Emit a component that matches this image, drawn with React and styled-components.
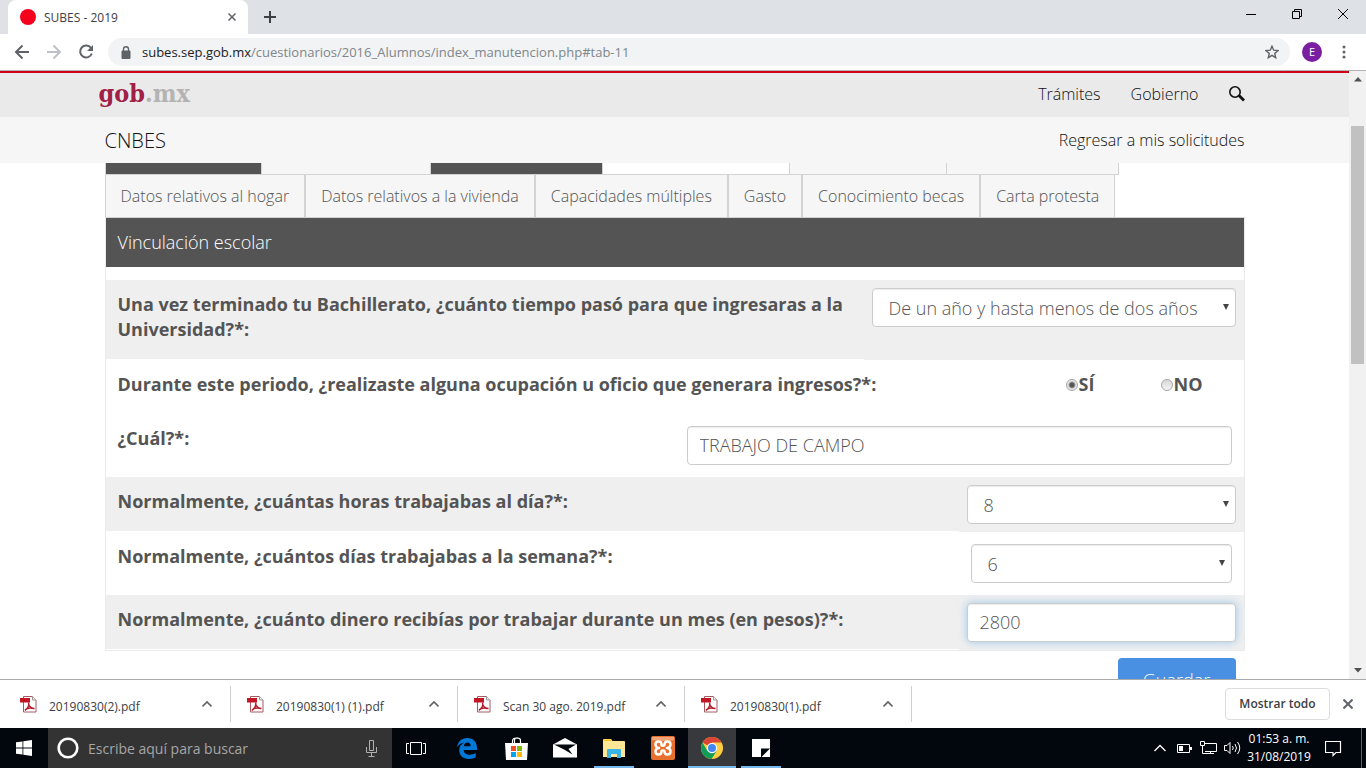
import React from "react";
import styled, { createGlobalStyle, css } from "styled-components";

const GlobalStyle = createGlobalStyle`
  *, *::before, *::after { box-sizing: border-box; }
  html, body, #root { height: 100%; margin: 0; }
  body { overflow: hidden; font-family: "Open Sans", sans-serif; color: #545454; background: #fff; }
  button, input, select { font-family: inherit; margin: 0; }
  a { color: inherit; text-decoration: none; }
  svg { display: block; flex: none; }
`;

const Screen = styled.div`
  display: flex;
  flex-direction: column;
  height: 100vh;
`;

const IconButton = styled.button`
  display: flex;
  align-items: center;
  justify-content: center;
  width: ${(p) => p.$width || 32}px;
  height: ${(p) => p.$height || 32}px;
  padding: 0;
  border: 0;
  background: none;
  color: ${(p) => p.$color || "#5f6368"};
`;

/* Browser chrome */
const TabStrip = styled.header`
  display: flex;
  height: 34px;
  flex: none;
  padding-left: 8px;
  background: #dee1e6;
`;

const BrowserTab = styled.div`
  display: flex;
  align-items: center;
  width: 240px;
  padding: 0 8px 0 12px;
  border-radius: 8px 8px 0 0;
  background: #fff;
  color: #3c4043;
  font-size: 12px;
`;

const Favicon = styled.span`
  width: 16px;
  height: 16px;
  margin-right: 8px;
  border-radius: 50%;
  background: #f5001d;
`;

const TabTitle = styled.span`
  flex: 1;
`;

const WindowButtons = styled.div`
  display: flex;
  margin-left: auto;
`;

const Toolbar = styled.nav`
  display: flex;
  align-items: center;
  height: 36px;
  flex: none;
  padding: 0 6px;
  background: #fff;
`;

const AddressBar = styled.div`
  display: flex;
  flex: 1;
  align-items: center;
  height: 28px;
  margin: 0 6px;
  padding: 0 2px 0 12px;
  border-radius: 14px;
  background: #f1f3f4;
  color: #80868b;
  font-size: 13px;
  white-space: nowrap;
`;

const Url = styled.span`
  flex: 1;
  margin-left: 10px;
`;

const Host = styled.span`
  color: #202124;
`;

const Avatar = styled.button`
  width: 20px;
  height: 20px;
  margin: 0 6px;
  padding: 0;
  border: 0;
  border-radius: 50%;
  background: #7b1fa2;
  color: #fff;
  font-size: 11px;
  line-height: 20px;
`;

const Viewport = styled.div`
  display: flex;
  flex: 1;
  min-height: 0;
  border-top: 1px solid #b4b4b4;
  overflow: hidden;
`;

const Page = styled.div`
  flex: 1;
  min-width: 0;
  overflow: hidden;
  font-size: 16px;
  font-weight: 300;
`;

const Container = styled.div`
  display: flex;
  align-items: center;
  max-width: 1140px;
  height: 100%;
  margin: 0 auto;
  color: #111;
`;

const GovBar = styled.div`
  height: 46px;
  padding-bottom: 2px;
  border-top: 2px solid #d0021b;
  background: #eaeaea;
`;

const SiteBar = styled.div`
  height: 46px;
  background: #f6f6f6;
`;

const Logo = styled.a`
  margin: 0 auto 0 -6px;
  color: #a12046;
  font-family: "DejaVu Serif Condensed", "DejaVu Serif", serif;
  font-size: 25px;
  font-weight: 700;
  line-height: 40px;
`;

const LogoSuffix = styled.span`
  color: #b3b3b3;
`;

const NavLink = styled.a`
  margin-right: 30px;
`;

const SiteName = styled.a`
  margin-right: auto;
  font-size: 20px;
`;

const Main = styled.main`
  max-width: 1140px;
  margin: 0 auto;
`;

const TabRow = styled.div`
  display: flex;
  height: ${(p) => p.$height}px;
`;

const TabEdge = styled.span`
  width: ${(p) => p.$width}px;
  border: solid #d3d3d3;
  border-width: 0 1px 1px ${(p) => (p.$first ? 1 : 0)}px;
  background: ${(p) => p.$fill};
`;

const FormTab = styled.button`
  padding: 0 15px;
  border: solid #d3d3d3;
  border-width: 0 1px;
  background: #f6f6f6;
  color: #545454;
  font-size: 16px;
  font-weight: 300;
  white-space: nowrap;
`;

const Panel = styled.section`
  border: 1px solid #ebebeb;
  border-top-color: #d3d3d3;
`;

const PanelTitle = styled.h2`
  margin: 0 0 13px;
  padding: 0 12px;
  background: #545454;
  color: #fff;
  font-size: 18px;
  font-weight: 300;
  line-height: 49px;
`;

const Row = styled.div`
  display: grid;
  grid-template-columns: minmax(0, 1fr) ${(p) => p.$control}px;
  min-height: ${(p) => p.$height}px;
  background: ${(p) => (p.$shaded ? "#efefef" : "#fff")};
  font-size: 18px;
  font-weight: 700;
  line-height: 25px;
`;

const Question = styled.label`
  padding: 12px 12px 0;
  border-bottom: 1px solid #fff;
`;

const Control = styled.div`
  position: relative;
  padding: ${(p) => (p.$inset ? "12px 12px 0" : "8px 8px 0")};
`;

const fieldStyle = css`
  display: block;
  width: 100%;
  height: 39px;
  border: 1px solid #ccc;
  border-radius: 4px;
  background: #fff;
  box-shadow: inset 0 1px 1px rgba(0, 0, 0, 0.08);
  color: #545454;
  font-size: 18px;
  font-weight: 300;
  outline: 0;
`;

const TextInput = styled.input`
  ${fieldStyle}
  padding: 0 12px 2px;
  ${(p) => p.$glow && css`box-shadow: inset 0 1px 1px rgba(0, 0, 0, 0.08), 0 0 8px rgba(102, 175, 233, 0.6);`}
`;

const Select = styled.select`
  ${fieldStyle}
  appearance: none;
  padding: 1px 16px 0;
`;

const SelectBox = styled.div`
  position: relative;

  &::after {
    content: "";
    position: absolute;
    top: 16px;
    right: 7px;
    border: solid transparent;
    border-width: 6px 3px 0;
    border-top-color: #444;
  }
`;

const RadioGroup = styled.div`
  display: grid;
  grid-template-columns: 95px 1fr;
  padding-top: 12px;
`;

const RadioLabel = styled.label`
  display: flex;
  align-items: center;
  height: 25px;
`;

const Radio = styled.input`
  appearance: none;
  width: 12px;
  height: 12px;
  margin-right: 1px;
  border: 1px solid #a5a5a5;
  border-radius: 50%;
  background: linear-gradient(#d8d8d8, #f4f4f4);

  &:checked {
    background: radial-gradient(circle, #555 0 2px, #e8e8e8 4px);
  }
`;

const Actions = styled.div`
  display: flex;
  justify-content: flex-end;
  padding: 7px 9px 0;
`;

const SaveButton = styled.button`
  width: 118px;
  height: 44px;
  border: 0;
  border-radius: 4px;
  background: #4a90e2;
  color: #fff;
  font-size: 18px;
  font-weight: 300;
`;

const Scrollbar = styled.div`
  display: flex;
  flex-direction: column;
  align-items: center;
  width: 17px;
  padding: 6px 0;
  background: #f1f1f1;
`;

const Thumb = styled.div`
  width: 13px;
  height: 40%;
  margin: 44px 0 auto;
  background: #c1c1c1;
`;

/* Downloads shelf */
const Shelf = styled.div`
  display: flex;
  align-items: center;
  height: 49px;
  flex: none;
  padding-right: 2px;
  border-top: 1px solid #a9a9a9;
  background: #fff;
  color: #3c4043;
`;

const Download = styled.div`
  display: flex;
  align-items: center;
  width: ${(p) => (p.$first ? 231 : 227)}px;
  height: 36px;
  padding: 0 7px 0 ${(p) => (p.$first ? 20 : 16)}px;
  border-right: 1px solid #cfcfcf;
`;

const FileLink = styled.a`
  flex: 1;
  margin-left: 12px;
  padding-top: 4px;
  font-size: 12px;
  white-space: nowrap;
`;

const ShowAll = styled.button`
  width: 105px;
  height: 32px;
  margin: 0 2px 0 auto;
  padding: 0 0 2px;
  border: 1px solid #dadce0;
  border-radius: 4px;
  background: #fff;
  color: #3c4043;
  font-size: 12px;
  font-weight: 600;
`;

/* Taskbar */
const Taskbar = styled.footer`
  display: flex;
  height: 40px;
  flex: none;
  background: #02060d;
  color: #fff;
`;

const SearchBox = styled.label`
  display: flex;
  align-items: center;
  width: 344px;
  padding: 0 14px 0 8px;
  background: #333;
`;

const SearchInput = styled.input`
  flex: 1;
  min-width: 0;
  padding: 0 0 0 9px;
  border: 0;
  background: none;
  color: #fff;
  font-size: 14px;
  outline: 0;

  &::placeholder { color: #a6a6a6; opacity: 1; }
`;

const Apps = styled.div`
  display: flex;
  gap: 1px;
  margin-left: 3px;
`;

const AppButton = styled.button`
  display: flex;
  align-items: center;
  justify-content: center;
  width: 48px;
  padding: 0;
  border: 0;
  background: ${(p) => (p.$active ? "#37393d" : "none")};
  background-image: ${(p) => (p.$open || p.$active ? "linear-gradient(#76b9ed, #76b9ed)" : "none")};
  background-repeat: no-repeat;
  background-position: 50% 100%;
  background-size: ${(p) => (p.$active ? 48 : 40)}px 2px;
`;

const Tray = styled.div`
  display: flex;
  align-items: center;
  margin-left: auto;
`;

const Clock = styled.time`
  width: 70px;
  font-size: 12px;
  line-height: 18px;
  text-align: center;
  white-space: nowrap;
`;

const ShowDesktop = styled.span`
  width: 5px;
  height: 40px;
  margin-left: 9px;
  border-left: 1px solid #5c5f64;
`;

const Stroke = ({ size = 16, d, width = 2, vb = 16, ...rest }) => (
  <svg width={size} height={size} viewBox={`0 0 ${vb} ${vb}`} fill="none" stroke="currentColor" strokeWidth={width} aria-hidden="true" {...rest}>
    <path d={d} />
  </svg>
);

const PdfIcon = () => (
  <svg width="17" height="17" viewBox="0 0 17 17" aria-hidden="true">
    <path d="M3.500.5h9l3.500 3.500v12h-12.500z" fill="#fff" stroke="#a65a5e" />
    <path d="M12.500.5v3.500H16" fill="#eee" stroke="#999" />
    <path d="M0 2h10v4.500H0z" fill="#c21625" />
    <path d="M8.500 6.500c1 2.500-1 6-3.500 8M8.500 8c1 3 3 4.500 6 4.500M5 14c2-2 5.500-2.500 9-1.500" fill="none" stroke="#b71c2b" strokeWidth="1.500" />
  </svg>
);

const Arrow = ({ down }) => (
  <svg width="8" height="5" viewBox="0 0 8 5" aria-hidden="true">
    <path d={down ? "M0 0h8L4 4.500z" : "M0 4.500h8L4 0z"} fill="#505050" />
  </svg>
);

const WindowsIcon = () => (
  <svg width="16" height="16" viewBox="0 0 16 16" fill="#fff" aria-hidden="true">
    <path d="M0 2.300l6.500-.9v6.200H0zM7.300 1.300L16 0v7.600H7.300zM0 8.400h6.500v6.200L0 13.700zM7.300 8.400H16V16l-8.700-1.300z" />
  </svg>
);

const MicIcon = () => (
  <svg width="13" height="17" viewBox="0 0 13 17" fill="none" stroke="#b0b0b0" aria-hidden="true">
    <path d="M4.500.5h4v10h-4zM1.500 7v5.500h10V7M6.500 12.500v3.500M3.500 16.500h6" />
  </svg>
);

const TaskViewIcon = () => (
  <svg width="20" height="13" viewBox="0 0 20 13" fill="none" stroke="#fff" aria-hidden="true">
    <path d="M4.500.5h11v12h-11zM3 1.500H.5v10H3M17 1.500h2.500v10H17" />
  </svg>
);

const EdgeIcon = () => (
  <svg width="20" height="21" viewBox="0 0 20 21" aria-hidden="true">
    <path d="M0 9.300C.8 3.600 4.600 0 10.200 0 16.200 0 20 4.100 20 10v2H6.600c.2 3.200 2.900 4.700 6.100 4.700 2.200 0 4.200-.6 6-1.700v4.300c-2 1.100-4.300 1.700-7 1.700-5.800 0-9.500-3.500-9.500-8.700 0-3.700 2-6.400 5.200-7.900C4 4.900 1.600 6.600 0 9.300zM6.800 8.300h6.900c0-2.300-1.200-3.700-3.300-3.700-2 0-3.300 1.400-3.600 3.700z" fill="#0078d7" />
  </svg>
);

const StoreIcon = () => (
  <svg width="23" height="23" viewBox="0 0 23 23" aria-hidden="true">
    <path d="M7.500 7V4q0-3 4-3t4 3v3M9.500 7V3q0-2 3-2t3 2" fill="none" stroke="#fff" strokeWidth="1.200" />
    <path d="M0 6h23l-1 17H1z" fill="#fff" />
    <path d="M6 9h5v5H6z" fill="#f25022" />
    <path d="M12 9h5v5h-5z" fill="#7fba00" />
    <path d="M6 15h5v5H6z" fill="#00a4ef" />
    <path d="M12 15h5v5h-5z" fill="#ffb900" />
  </svg>
);

const MailIcon = () => (
  <svg width="24" height="20" viewBox="0 0 24 20" aria-hidden="true">
    <path d="M0 6.500L12 0l12 6.500v13H0z" fill="#fff" />
    <path d="M1 6.500h22L15.500 11l4 5.500L11 11.500z" fill="#02060d" />
  </svg>
);

const FolderIcon = () => (
  <svg width="22" height="19" viewBox="0 0 22 19" aria-hidden="true">
    <path d="M0 1q0-1 1-1h7l1.500 2H21q1 0 1 1v15H0z" fill="#ffe596" />
    <path d="M1 .5h7l1 1.500H1z" fill="#f5c11f" />
    <path d="M4 19v-8q0-1 1-1h12q1 0 1 1v8h-4v-4H8v4z" fill="#39b5e8" />
  </svg>
);

const XamppIcon = () => (
  <svg width="24" height="24" viewBox="0 0 24 24" aria-hidden="true">
    <rect width="24" height="24" rx="2" fill="#e9702c" />
    <path d="M1 1h22v3q-11 2-22 0z" fill="#f3a57a" />
    <path
      d="M10.500 9.500V8.500C10.500 4.500 4.500 4.500 4.500 8.500c0 2 1.500 3.500 3.500 3.500-2 0-3.500 1.500-3.500 3.500 0 4 6 4 6 0 0-1.500 3-1.500 3 0 0 4 6 4 6 0 0-2-1.500-3.500-3.500-3.500 2 0 3.500-1.500 3.500-3.500 0-4-6-4-6 0 0 1.500-3 1.500-3 0z"
      fill="none"
      stroke="#fff"
      strokeWidth="2.500"
      strokeLinejoin="round"
    />
  </svg>
);

const ChromeIcon = () => (
  <svg width="22" height="22" viewBox="0 0 22 22" aria-hidden="true">
    <circle cx="11" cy="11" r="11" fill="#ffcd40" />
    <path d="M11 11L1.500 5.500A11 11 0 0 1 20.500 5.500H11z" fill="#db4437" />
    <path d="M1.500 5.500A11 11 0 0 0 10.500 22L15.800 13.800 6.200 13.800z" fill="#0f9d58" />
    <circle cx="11" cy="11" r="5.200" fill="#fff" />
    <circle cx="11" cy="11" r="4" fill="#4285f4" />
  </svg>
);

const NotesIcon = () => (
  <svg width="18" height="18" viewBox="0 0 18 18" aria-hidden="true">
    <path d="M0 0h18v18H0z" fill="#fff" />
    <path d="M9 9.500h9L9.500 18H9z" fill="#02060d" />
  </svg>
);

const downloads = ["20190830(2).pdf", "20190830(1) (1).pdf", "Scan 30 ago. 2019.pdf", "20190830(1).pdf"];

const formTabs = [
  "Datos relativos al hogar",
  "Datos relativos a la vivienda",
  "Capacidades múltiples",
  "Gasto",
  "Conocimiento becas",
  "Carta protesta",
];

const upperTabs = [
  { width: 157, fill: "#545454" },
  { width: 169, fill: "#f6f6f6" },
  { width: 172, fill: "#545454" },
  { width: 187, fill: "#fff" },
  { width: 157, fill: "#f6f6f6" },
  { width: 172, fill: "#f6f6f6" },
];

const SelectField = ({ id, value }) => (
  <SelectBox>
    <Select id={id} defaultValue={value}>
      <option>{value}</option>
    </Select>
  </SelectBox>
);

export default function App() {
  return (
    <Screen>
      <GlobalStyle />
      <TabStrip>
        <BrowserTab>
          <Favicon />
          <TabTitle>SUBES - 2019</TabTitle>
          <IconButton $width={16}><Stroke size={8} vb={8} width={1.5} d="M.5.5l7 7M7.500.5l-7 7" /></IconButton>
        </BrowserTab>
        <IconButton $width={44} $height={34} $color="#3c4043"><Stroke size={12} vb={12} d="M6 0v12M0 6h12" /></IconButton>
        <WindowButtons>
          <IconButton $width={46} $height={28} $color="#000"><Stroke size={10} vb={10} width={1} d="M0 5.500h10" /></IconButton>
          <IconButton $width={46} $height={28} $color="#000"><Stroke size={10} vb={10} width={1} d="M.5 2.500h7v7h-7zM2.500 2.500v-2h7v7h-2" /></IconButton>
          <IconButton $width={46} $height={28} $color="#000"><Stroke size={10} vb={10} width={1} d="M0 0l10 10M10 0L0 10" /></IconButton>
        </WindowButtons>
      </TabStrip>

      <Toolbar>
        <IconButton><Stroke d="M15 8H2M8.500 1.500L2 8l6.500 6.500" /></IconButton>
        <IconButton $color="#bdc1c6"><Stroke d="M1 8h13M7.500 1.500L14 8l-6.500 6.500" /></IconButton>
        <IconButton>
          <svg width="16" height="16" viewBox="0 0 16 16" aria-hidden="true">
            <path d="M13 4A6 6 0 1 0 13.800 9.500" fill="none" stroke="currentColor" strokeWidth="2" />
            <path d="M15 1v6H9z" fill="currentColor" />
          </svg>
        </IconButton>
        <AddressBar>
          <svg width="12" height="13" viewBox="0 0 12 13" aria-hidden="true">
            <path d="M2 5h8v7.500H2z" fill="#5f6368" stroke="#5f6368" strokeLinejoin="round" />
            <path d="M3.500 5V3.300a2.500 2.500 0 0 1 5 0V5" fill="none" stroke="#5f6368" strokeWidth="1.400" />
          </svg>
          <Url><Host>subes.sep.gob.mx</Host>/cuestionarios/2016_Alumnos/index_manutencion.php#tab-11</Url>
          <IconButton $height={28}>
            <Stroke size={14} vb={14} width={1.4} d="M7 1.200l1.700 4 4.300.4-3.300 2.800 1 4.300L7 10.400l-3.700 2.300 1-4.300L1 5.600l4.300-.4z" />
          </IconButton>
        </AddressBar>
        <Avatar>E</Avatar>
        <IconButton>
          <svg width="4" height="14" viewBox="0 0 4 14" fill="currentColor" aria-hidden="true">
            <circle cx="2" cy="2" r="1.500" /><circle cx="2" cy="7" r="1.500" /><circle cx="2" cy="12" r="1.500" />
          </svg>
        </IconButton>
      </Toolbar>

      <Viewport>
        <Page>
          <GovBar>
            <Container>
              <Logo href="#gob">gob<LogoSuffix>.mx</LogoSuffix></Logo>
              <NavLink href="#tramites">Trámites</NavLink>
              <NavLink href="#gobierno">Gobierno</NavLink>
              <IconButton $width={16} $color="#111">
                <svg width="16" height="16" viewBox="0 0 16 16" fill="none" stroke="currentColor" aria-hidden="true">
                  <circle cx="6" cy="6" r="5.200" strokeWidth="1.600" />
                  <path d="M10 9.500l5 5" strokeWidth="2.800" />
                </svg>
              </IconButton>
            </Container>
          </GovBar>
          <SiteBar>
            <Container>
              <SiteName href="#cnbes">CNBES</SiteName>
              <a href="#solicitudes">Regresar a mis solicitudes</a>
            </Container>
          </SiteBar>

          <Main>
            <TabRow $height={12}>
              {upperTabs.map((t, i) => <TabEdge key={i} $width={t.width} $fill={t.fill} $first={i === 0} />)}
            </TabRow>
            <TabRow $height={42}>
              {formTabs.map((t) => <FormTab key={t}>{t}</FormTab>)}
            </TabRow>
            <Panel>
              <PanelTitle>Vinculación escolar</PanelTitle>
              <Row $shaded $control={380} $height={80}>
                <Question htmlFor="tiempo">Una vez terminado tu Bachillerato, ¿cuánto tiempo pasó para que ingresaras a la Universidad?*:</Question>
                <Control><SelectField id="tiempo" value="De un año y hasta menos de dos años" /></Control>
              </Row>
              <Row $control={178} $height={54}>
                <Question as="span">Durante este periodo, ¿realizaste alguna ocupación u oficio que generara ingresos?*:</Question>
                <RadioGroup>
                  <RadioLabel><Radio type="radio" name="ocupacion" defaultChecked />SÍ</RadioLabel>
                  <RadioLabel><Radio type="radio" name="ocupacion" />NO</RadioLabel>
                </RadioGroup>
              </Row>
              <Row $control={569} $height={63}>
                <Question htmlFor="cual">¿Cuál?*:</Question>
                <Control $inset><TextInput id="cual" defaultValue="TRABAJO DE CAMPO" /></Control>
              </Row>
              <Row $shaded $control={285} $height={55}>
                <Question htmlFor="horas">Normalmente, ¿cuántas horas trabajabas al día?*:</Question>
                <Control><SelectField id="horas" value="8" /></Control>
              </Row>
              <Row $control={285} $height={63}>
                <Question htmlFor="dias">Normalmente, ¿cuántos días trabajabas a la semana?*:</Question>
                <Control $inset><SelectField id="dias" value="6" /></Control>
              </Row>
              <Row $shaded $control={285} $height={55}>
                <Question htmlFor="dinero">Normalmente, ¿cuánto dinero recibías por trabajar durante un mes (en pesos)?*:</Question>
                <Control><TextInput id="dinero" $glow defaultValue="2800" /></Control>
              </Row>
            </Panel>
            <Actions><SaveButton>Guardar</SaveButton></Actions>
          </Main>
        </Page>
        <Scrollbar><Arrow /><Thumb /><Arrow down /></Scrollbar>
      </Viewport>

      <Shelf>
        {downloads.map((name, i) => (
          <Download key={name} $first={i === 0}>
            <PdfIcon />
            <FileLink href="#descarga">{name}</FileLink>
            <IconButton><Stroke size={10} vb={10} width={1.6} d="M.5 7.500L5 3l4.500 4.500" /></IconButton>
          </Download>
        ))}
        <ShowAll>Mostrar todo</ShowAll>
        <IconButton><Stroke size={10} vb={10} d="M.5.5l9 9M9.500.5l-9 9" /></IconButton>
      </Shelf>

      <Taskbar>
        <IconButton $width={48} $height={40}><WindowsIcon /></IconButton>
        <SearchBox>
          <svg width="23" height="22" viewBox="0 0 23 22" fill="none" aria-hidden="true">
            <circle cx="12" cy="11" r="9.300" stroke="#fff" strokeWidth="2.600" />
          </svg>
          <SearchInput placeholder="Escribe aquí para buscar" />
          <MicIcon />
        </SearchBox>
        <IconButton $width={48} $height={40}><TaskViewIcon /></IconButton>
        <Apps>
          <AppButton><EdgeIcon /></AppButton>
          <AppButton><StoreIcon /></AppButton>
          <AppButton><MailIcon /></AppButton>
          <AppButton $open><FolderIcon /></AppButton>
          <AppButton><XamppIcon /></AppButton>
          <AppButton $active><ChromeIcon /></AppButton>
          <AppButton $open><NotesIcon /></AppButton>
        </Apps>
        <Tray>
          <IconButton $width={24} $color="#fff"><Stroke size={12} vb={12} width={1.3} d="M.5 9L6 3.500 11.500 9" /></IconButton>
          <IconButton $width={24} $color="#fff">
            <svg width="15" height="9" viewBox="0 0 15 9" fill="#fff" aria-hidden="true">
              <path d="M.5.5h12v8H.5z" fill="none" stroke="#fff" /><path d="M2 2h4v5H2zM13 3h2v3h-2z" />
            </svg>
          </IconButton>
          <IconButton $width={24} $color="#fff">
            <svg width="17" height="14" viewBox="0 0 17 14" fill="none" stroke="#fff" aria-hidden="true">
              <path d="M5 2.500h11.500v8H5M.5.5h4v4h-4zM2.500 4.500v8H14M10.500 10.500v2" />
            </svg>
          </IconButton>
          <IconButton $width={24} $color="#fff">
            <svg width="17" height="14" viewBox="0 0 17 14" fill="none" stroke="#fff" aria-hidden="true">
              <path d="M.5 4.500H3l3-3v11l-3-3H.5zM8.500 5q1.500 2 0 4M11 3q3 4 0 8M13.500 1q4.500 6 0 12" />
            </svg>
          </IconButton>
          <Clock>01:53 a. m.<br />31/08/2019</Clock>
          <IconButton $width={38} $color="#fff"><Stroke size={17} vb={17} width={1.2} d="M.5 1.500h15v11H11l-3 3v-3H.5z" /></IconButton>
          <ShowDesktop />
        </Tray>
      </Taskbar>
    </Screen>
  );
}
